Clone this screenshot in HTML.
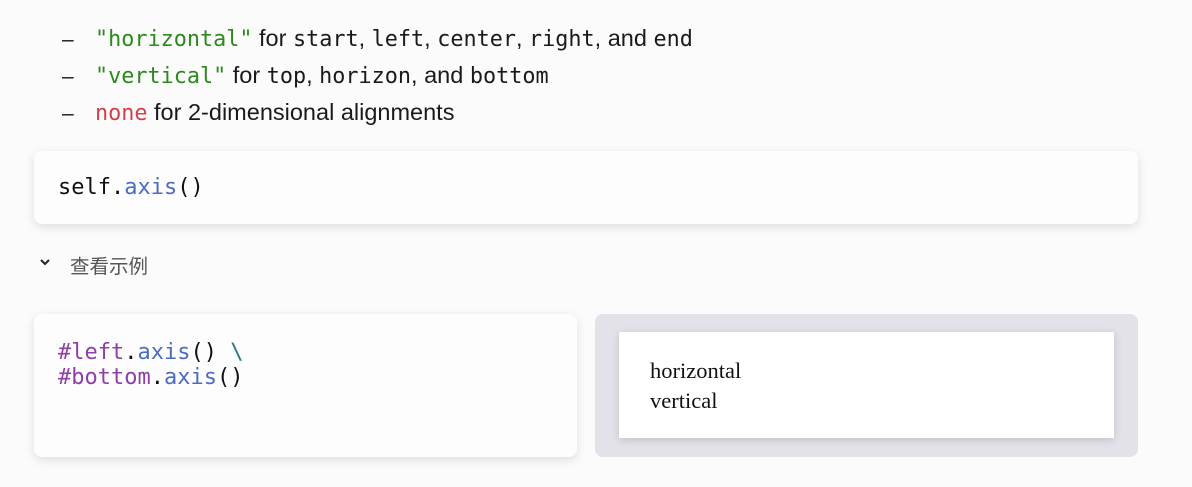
<!DOCTYPE html>
<html><head><meta charset="utf-8"><style>
body{margin:0;width:1192px;height:487px;background:#fbfbfc;font-family:"Liberation Sans","Noto Sans CJK SC",sans-serif;color:#1a1a1a;overflow:hidden;position:relative}
.li{position:absolute;left:62px;font-size:23.5px;line-height:28px;white-space:nowrap}
.li .d{display:inline-block;width:33px;font-size:21px}
code{font-family:"DejaVu Sans Mono","Liberation Mono",monospace;font-size:21.8px}
.g{color:#2c8a1c}.r{color:#d4404a}.b{color:#4b6bc4}.p{color:#8e3fa8}
.card{position:absolute;background:#fdfdfd;border-radius:8px;box-shadow:0 3px 10px rgba(0,0,0,.12)}
.mono{font-family:"DejaVu Sans Mono","Liberation Mono",monospace;font-size:22px;line-height:25px;color:#111}
</style></head><body>
<div class="li" style="top:24px"><span class="d">–</span><code class="g">"horizontal"</code> for <code>start</code>, <code>left</code>, <code>center</code>, <code>right</code>, and <code>end</code></div>
<div class="li" style="top:61px"><span class="d">–</span><code class="g">"vertical"</code> for <code>top</code>, <code>horizon</code>, and <code>bottom</code></div>
<div class="li" style="top:98px"><span class="d">–</span><code class="r">none</code> for 2-dimensional alignments</div>
<div class="card" style="left:34px;top:151px;width:1104px;height:73px">
<div class="mono" style="position:absolute;left:24px;top:24px">self.<span class="b">axis</span>()</div></div>
<svg style="position:absolute;left:39px;top:258px" width="12" height="8" viewBox="0 0 12 8"><path d="M2 2l4 4 4-4" fill="none" stroke="#222" stroke-width="2"/></svg>
<div style="position:absolute;left:70px;top:250px;font-size:19.5px;color:#555">查看示例</div>
<div class="card" style="left:34px;top:314px;width:543px;height:143px">
<div class="mono" style="position:absolute;left:24px;top:26px"><span class="p">#left</span>.<span class="b">axis</span>() <span style="color:#2a7a80">\</span><br><span class="p">#bottom</span>.<span class="b">axis</span>()</div></div>
<div style="position:absolute;left:595px;top:314px;width:543px;height:143px;background:#e2e2e8;border-radius:8px">
<div style="position:absolute;left:24px;top:18px;width:495px;height:106px;background:#fff;box-shadow:0 2px 8px rgba(0,0,0,.15);font-family:'Liberation Serif',serif;font-size:22.5px;line-height:30px;color:#111">
<div style="position:absolute;left:31px;top:24px">horizontal<br>vertical</div></div></div>
</body></html>
